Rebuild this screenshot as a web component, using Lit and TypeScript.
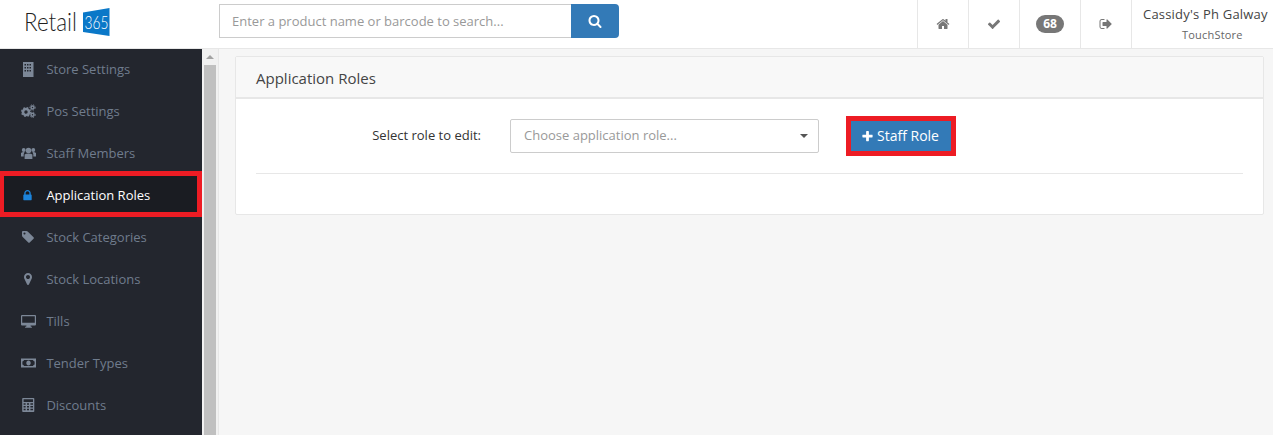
import { LitElement, html, css, svg } from "lit";
import { customElement } from "lit/decorators.js";

const ic = (d: string, s = 14, box = 1792) =>
  html`<svg class="ic" width=${s} height=${s} viewBox="0 0 ${box} ${box}" fill="currentColor">${svg`<path d=${d}></path>`}</svg>`;

const P = {
  home: "M1472 992v480q0 26-19 45t-45 19h-384v-384h-256v384h-384q-26 0-45-19t-19-45v-480q0-1 .5-3t.5-3l575-474 575 474q1 2 1 6zm223-69l-62 74q-8 9-21 11h-3q-13 0-21-7l-692-577-692 577q-12 8-24 7-13-2-21-11l-62-74q-8-10-7-23.500t11-21.500l719-599q32-26 76-26t76 26l244 204v-195q0-14 9-23t23-9h192q14 0 23 9t9 23v408l219 182q10 8 11 21.500t-7 23.500z",
  check: "M1671 566q0 40-28 68l-724 724-136 136q-28 28-68 28t-68-28l-136-136-362-362q-28-28-28-68t28-68l136-136q28-28 68-28t68 28l294 295 656-657q28-28 68-28t68 28l136 136q28 28 28 68z",
  search: "M1216 832q0-185-131.500-316.500t-316.500-131.500-316.500 131.500-131.500 316.500 131.500 316.500 316.500 131.500 316.500-131.500 131.500-316.500zm512 832q0 52-38 90t-90 38q-54 0-90-38l-343-342q-179 124-399 124-143 0-273.500-55.500t-225-150-150-225-55.500-273.500 55.500-273.500 150-225 225-150 273.500-55.500 273.500 55.500 225 150 150 225 55.500 273.500q0 220-124 399l343 343q37 37 37 90z",
  plus: "M1600 736v192q0 40-28 68t-68 28h-416v416q0 40-28 68t-68 28h-192q-40 0-68-28t-28-68v-416h-416q-40 0-68-28t-28-68v-192q0-40 28-68t68-28h416v-416q0-40 28-68t68-28h192q40 0 68 28t28 68v416h416q40 0 68 28t28 68z",
  out: "M704 1440q0 4 1 20t.5 26.500-3 23.500-10 19.500-20.500 6.500h-320q-119 0-203.500-84.500t-84.500-203.500v-704q0-119 84.500-203.500t203.500-84.500h320q13 0 22.500 9.500t9.500 22.500q0 4 1 20t.5 26.500-3 23.500-10 19.500-20.500 6.500h-320q-66 0-113 47t-47 113v704q0 66 47 113t113 47h312l11.500 1 11.500 3 8 5.500 7 9 2 13.500zm928-544q0 26-19 45l-544 544q-19 19-45 19t-45-19-19-45v-288h-448q-26 0-45-19t-19-45v-384q0-26 19-45t45-19h448v-288q0-26 19-45t45-19 45 19l544 544q19 19 19 45z",
  lock: "M640 768h512v-192q0-106-75-181t-181-75-181 75-75 181v192zm832 96v576q0 40-28 68t-68 28h-960q-40 0-68-28t-28-68v-576q0-40 28-68t68-28h32v-192q0-184 132-316t316-132 316 132 132 316v192h32q40 0 68 28t28 68z",
  tag: "M576 448q0-53-37.500-90.500t-90.500-37.500-90.500 37.500-37.500 90.500 37.500 90.500 90.500 37.500 90.500-37.500 37.500-90.500zm1067 576q0 53-37 90l-491 492q-39 37-91 37-53 0-90-37l-715-716q-38-37-64.500-101t-26.500-117v-416q0-52 38-90t90-38h416q53 0 117 26.500t102 64.500l715 714q37 39 37 91z",
  pin: "M1152 640q0-106-75-181t-181-75-181 75-75 181 75 181 181 75 181-75 75-181zm256 0q0 109-33 179l-364 774q-16 33-47.500 52t-67.500 19-67.500-19-46.500-52l-365-774q-33-70-33-179 0-212 150-362t362-150 362 150 150 362z",
};

const building = svg`<svg class="ic" width="14" height="15" viewBox="0 0 14 15"><path fill="currentColor" fill-rule="evenodd" d="M2 0h10.500v15H2zM3.500 2v1.500H5V2zm2.500 0v1.500h1.500V2zm2.500 0v1.500H10V2zM3.500 5v1.500H5V5zM6 5v1.500h1.500V5zm2.500 0v1.500H10V5zM3.500 8v1.500H5V8zM6 8v1.500h1.500V8zm2.500 0v1.500H10V8z"/></svg>`;
const gears = svg`<svg class="ic" width="15" height="14" viewBox="0 0 15 14"><g fill="none" stroke="currentColor"><circle cx="5" cy="8" r="3" stroke-width="2.600"/><circle cx="5" cy="8" r="4.300" stroke-width="1.400" stroke-dasharray="1.700 1.700"/><circle cx="11.500" cy="3.500" r="1.500" stroke-width="1.500"/><circle cx="11.500" cy="3.500" r="2.700" stroke-width="1" stroke-dasharray="1.300 1.300"/><circle cx="11.500" cy="10.800" r="1.500" stroke-width="1.500"/><circle cx="11.500" cy="10.800" r="2.700" stroke-width="1" stroke-dasharray="1.300 1.300"/></g></svg>`;
const users = svg`<svg class="ic" width="15" height="14" viewBox="0 0 15 14"><g fill="currentColor"><circle cx="7.500" cy="4.500" r="2.800"/><circle cx="2.700" cy="4" r="1.900"/><circle cx="12.300" cy="4" r="1.900"/><path d="M3.600 8.600Q5 7.600 7.500 7.600T11.400 8.600V13H3.600z"/><path d="M0 7q1-1 3.500-.9L2.700 8.200V10.500H0zM15 7q-1-1-3.500-.9l.8 2.100V10.500H15z"/></g></svg>`;
const desktop = svg`<svg class="ic" width="15" height="14" viewBox="0 0 15 14"><path fill="currentColor" fill-rule="evenodd" d="M1 1h13a1 1 0 0 1 1 1v8.500a1 1 0 0 1-1 1H9.500l.4 1.300h1v.9H4.100v-.9h1l.4-1.300H1a1 1 0 0 1-1-1V2a1 1 0 0 1 1-1zM1.200 2.200v6.600h12.600V2.200z"/></svg>`;
const money = svg`<svg class="ic" width="15" height="14" viewBox="0 0 15 14"><path fill="currentColor" fill-rule="evenodd" d="M0 2.500h15v9H0zM3 4a2 2 0 0 1-1.600 1.600v2.800A2 2 0 0 1 3 10h9a2 2 0 0 1 1.600-1.600V5.600A2 2 0 0 1 12 4zM7.500 4.500c1.300 0 2.200 1.100 2.200 2.500S8.800 9.500 7.500 9.500 5.300 8.400 5.300 7s.9-2.500 2.200-2.500z"/></svg>`;
const calc = svg`<svg class="ic" width="14" height="14" viewBox="0 0 14 14"><path fill="currentColor" fill-rule="evenodd" d="M2 0h10.500a.8.800 0 0 1 .8.800v12.400a.8.800 0 0 1-.8.800H2a.8.800 0 0 1-.8-.800V.8A.8.800 0 0 1 2 0zm.6 1.300v2.600h9.400V1.300zm0 3.900v1.500h2V5.200zm3.400 0v1.500h2V5.200zm3.400 0v1.500h2.600V5.200zM2.600 8v1.500h2V8zM6 8v1.500h2V8zm3.400 0v1.500h2.600V8zm-6.800 2.800v1.500h2v-1.500zm3.400 0v1.500h2v-1.500zm3.400 0v1.500h2.600v-1.500z"/></svg>`;

const items = [
  { label: "Store Settings", icon: building },
  { label: "Pos Settings", icon: gears },
  { label: "Staff Members", icon: users },
  { label: "Application Roles", icon: ic(P.lock, 13), active: true },
  { label: "Stock Categories", icon: ic(P.tag, 14) },
  { label: "Stock Locations", icon: ic(P.pin, 14) },
  { label: "Tills", icon: desktop },
  { label: "Tender Types", icon: money },
  { label: "Discounts", icon: calc },
];

@customElement("app-root")
export class AppRoot extends LitElement {
  static styles = css`
    :host { display: block; height: 435px; overflow: hidden; font-family: "Open Sans", sans-serif; font-size: 13px; color: #333; background: #f6f6f6; }
    * { box-sizing: border-box; }
    .ic { display: block; flex: none; }
    header { height: 49px; display: flex; background: #fff; border-bottom: 1px solid #e7e7e7; }
    .logo { width: 219px; flex: none; }
    .logo svg { display: block; }
    .search { display: flex; width: 400px; height: 34px; margin-top: 4px; }
    .search .input { flex: 1; border: 1px solid #ccc; border-right: 0; padding-left: 12px; font-size: 13px; line-height: 32px; color: #999; background: #fff; }
    .search .go { width: 48px; display: flex; align-items: center; justify-content: center; background: #337ab7; color: #fff; border-radius: 0 4px 4px 0; }
    .right { margin-left: auto; display: flex; }
    .cell { width: 51px; border-left: 1px solid #e7e7e7; display: flex; align-items: center; justify-content: center; color: #777; }
    .cell.wide { width: 61px; }
    .badge { width: 28px; height: 18px; border-radius: 10px; background: #777; color: #fff; font-size: 12px; font-weight: 700; line-height: 18px; text-align: center; }
    .user { width: 142px; flex: none; border-left: 1px solid #e7e7e7; padding: 5px 0 0 11px; white-space: nowrap; overflow: hidden; }
    .user .name { font-size: 13px; font-weight: 500; letter-spacing: 0.2px; line-height: 18px; color: #444; }
    .user .org { font-size: 11px; letter-spacing: 0.2px; line-height: 15px; margin-top: 4px; padding-left: 39px; color: #666; }
    .body { display: flex; height: 386px; }
    nav { width: 202px; flex: none; background: #23262e; color: #707c8d; }
    .list { margin-top: -1px; }
    .item { height: 42px; display: flex; align-items: center; padding-left: 21px; position: relative; }
    .item .slot { width: 25.400px; flex: none; display: flex; color: #7c8797; }
    .item.active { color: #fff; }
    .item.active .slot { color: #1c84dc; }
    .item.active .frame { position: absolute; left: 0; right: 0; top: -3px; bottom: -1px; border: 5px solid #ed1c24; border-left-width: 4px; background: #1a1c22; }
    .item .slot, .item .txt { position: relative; }
    .rail { width: 17px; flex: none; background: #f1f1f1; border-right: 1px solid #e7e7e7; padding: 0 2px 0 2px; }
    .arrow { height: 16px; display: flex; justify-content: center; align-items: center; }
    .arrow i { width: 0; height: 0; border: 4px solid transparent; border-top: 0; border-bottom: 4px solid #a3a3a3; }
    .thumb { height: 100%; background: #c0c0c0; }
    main { flex: 1; padding: 7px 9px 0 16px; }
    .panel { background: #fff; border: 1px solid #e7e7e7; border-radius: 2px; height: 159px; }
    .head { height: 42px; padding-left: 20px; background: #f8f8f8; border-bottom: 2px solid #e7e7e7; font-size: 15px; line-height: 42px; color: #444; }
    .content { padding: 17px 20px 0 20px; }
    .row { display: flex; align-items: center; padding-bottom: 17px; border-bottom: 1px solid #e7e7e7; }
    label { width: 225px; text-align: right; font-size: 13px; color: #333; line-height: 16px; padding-bottom: 2px; }
    .select { width: 309px; height: 34px; margin-left: 29px; border: 1px solid #ccc; border-radius: 2px; display: flex; align-items: center; justify-content: space-between; padding: 0 10px 2px 13px; font-size: 13px; color: #999; }
    .select i { width: 0; height: 0; border: 4px solid transparent; border-bottom: 0; border-top: 4px solid #555; margin-top: 2px; }
    .mark { margin-left: 27px; border: 5px solid #ed1c24; }
    .btn { width: 100px; height: 30px; background: #337ab7; color: #fff; display: flex; align-items: center; justify-content: center; gap: 3px; font-size: 14px; padding: 0 2px 2px 0; }
    .btn .ic { margin-top: 2px; }
  `;

  render() {
    return html`
      <header>
        <div class="logo">
          <svg width="120" height="48" viewBox="0 0 120 48">
            <text x="24" y="31" font-family="Lato" font-weight="300" font-size="25" textLength="53" lengthAdjust="spacingAndGlyphs" fill="#1f1f1f">Retail</text>
            <polygon points="83,12.500 109.500,8 109.500,36 83,32" fill="#0a78c8"></polygon>
            <text x="84.500" y="28.500" font-family="Lato" font-weight="300" font-size="17" textLength="24" lengthAdjust="spacingAndGlyphs" fill="#fff">365</text>
          </svg>
        </div>
        <div class="search">
          <div class="input">Enter a product name or barcode to search...</div>
          <div class="go">${ic(P.search, 14)}</div>
        </div>
        <div class="right">
          <div class="cell">${ic(P.home, 14)}</div>
          <div class="cell">${ic(P.check, 14)}</div>
          <div class="cell wide"><span class="badge">68</span></div>
          <div class="cell">${ic(P.out, 14)}</div>
          <div class="user">
            <div class="name">Cassidy's Ph Galway</div>
            <div class="org">TouchStore</div>
          </div>
        </div>
      </header>
      <div class="body">
        <nav>
          <div class="list">
            ${items.map(
              (it) => html`<div class="item ${it.active ? "active" : ""}">
                ${it.active ? html`<div class="frame"></div>` : ""}
                <span class="slot">${it.icon}</span><span class="txt">${it.label}</span>
              </div>`
            )}
          </div>
        </nav>
        <div class="rail">
          <div class="arrow"><i></i></div>
          <div class="thumb"></div>
        </div>
        <main>
          <div class="panel">
            <div class="head">Application Roles</div>
            <div class="content">
              <div class="row">
                <label>Select role to edit:</label>
                <div class="select"><span>Choose application role...</span><i></i></div>
                <div class="mark"><div class="btn">${ic(P.plus, 13)}<span>Staff Role</span></div></div>
              </div>
            </div>
          </div>
        </main>
      </div>
    `;
  }
}
